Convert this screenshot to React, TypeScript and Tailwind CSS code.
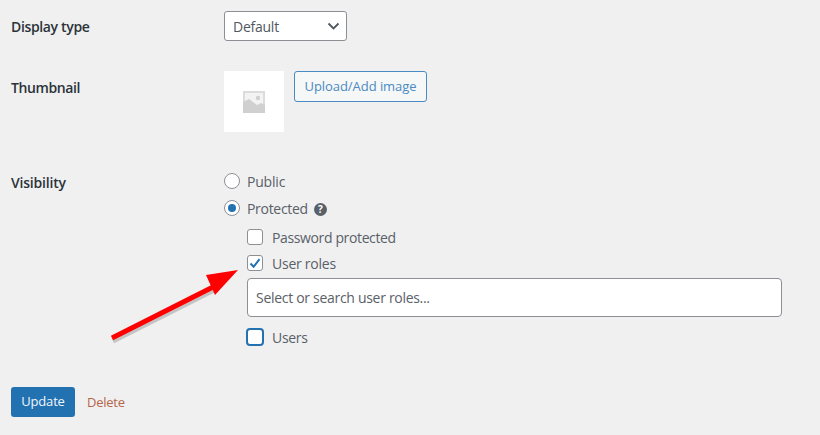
export default function App() {
  return (
    <div className="relative w-[820px] h-[435px] overflow-hidden bg-[#f0f0f1] pl-[11px] font-['Open_Sans','Noto_Sans',sans-serif] text-[14px] text-[#5a6068]">
      <div className="flex pt-[11px] h-[41px]">
        <div className="w-[213px] font-semibold text-[#2c3338] leading-[32px] tracking-[-0.35px]">Display type</div>
        <div className="w-[123px] h-[30px] rounded-[3px] border border-[#8c8f94] bg-white flex items-center justify-between pl-[8px] pr-[6px] text-[#50575e] tracking-[-0.25px]">
          <span>Default</span>
          <svg width="13" height="8" viewBox="0 0 13 8" fill="none"><path d="M1.5 1.5 6.5 6.5 11.5 1.5" stroke="#50575e" strokeWidth="1.8" /></svg>
        </div>
      </div>
      <div className="flex mt-[30px] h-[61px]">
        <div className="w-[213px] font-semibold text-[#2c3338] leading-[34px] tracking-[-0.4px]">Thumbnail</div>
        <div className="w-[60px] h-[61px] bg-white flex items-center justify-center">
          <svg width="22" height="22" viewBox="0 0 22 22">
            <rect width="22" height="22" fill="#dcdcdc" />
            <rect x="2" y="2" width="18" height="18" fill="#f3f3f3" />
            <circle cx="15" cy="7" r="2.2" fill="#d0d0d0" />
            <path d="M0 22V11l6-3 8 6 4-2 4 2v8z" fill="#d0d0d0" />
          </svg>
        </div>
        <div className="ml-[10px] w-[133px] h-[31px] rounded-[3px] border border-[#4a8bc2] bg-[#f6f7f7] text-[#4a8bc2] flex items-center justify-center text-[13px] tracking-[-0.05px]">Upload/Add image</div>
      </div>
      <div className="flex mt-[39px]">
        <div className="w-[213px] font-semibold text-[#2c3338] leading-[23px] tracking-[-0.2px]">Visibility</div>
        <div className="flex-1 flex flex-col">
          <div className="flex items-center h-[20px] gap-[7px]">
            <span className="w-[16px] h-[16px] rounded-full border border-[#8c8f94] bg-white" />
            <span className="tracking-[-0.2px]">Public</span>
          </div>
          <div className="flex items-center h-[20px] gap-[7px] mt-[7px]">
            <span className="w-[16px] h-[16px] rounded-full border border-[#8c8f94] bg-white flex items-center justify-center">
              <span className="w-[8px] h-[8px] rounded-full bg-[#2271b1]" />
            </span>
            <span className="tracking-[-0.3px]">Protected</span>
            <span className="w-[13px] h-[13px] rounded-full bg-[#5a6068] text-white text-[10px] font-bold leading-[13px] text-center -ml-[1px] mt-[3px]">?</span>
          </div>
          <div className="ml-[23px] flex flex-col">
            <div className="flex items-center h-[20px] gap-[9px] mt-[9px]">
              <span className="w-[16px] h-[16px] rounded-[3px] border border-[#8c8f94] bg-white" />
              <span className="tracking-[-0.37px]">Password protected</span>
            </div>
            <div className="flex items-center h-[20px] gap-[9px] mt-[6px]">
              <span className="w-[16px] h-[16px] rounded-[3px] border border-[#8c8f94] bg-white flex items-center justify-center">
                <svg width="12" height="11" viewBox="0 0 12 11" fill="none"><path d="M1.5 5.5 4.6 8.8 10.5 1.2" stroke="#2271b1" strokeWidth="2" /></svg>
              </span>
              <span className="tracking-[-0.25px]">User roles</span>
            </div>
            <div className="mt-[5px] w-[535px] h-[39px] rounded-[4px] border border-[#8c8f94] bg-white flex items-center pl-[8px] tracking-[-0.3px]">Select or search user roles...</div>
            <div className="flex items-center h-[20px] gap-[8px] mt-[10px] -ml-[1px]">
              <span className="w-[18px] h-[18px] rounded-[4px] border-2 border-[#2271b1] bg-white" />
              <span className="tracking-[-0.3px]">Users</span>
            </div>
          </div>
        </div>
      </div>
      <div className="flex items-center mt-[40px]">
        <div className="w-[64px] h-[30px] rounded-[3px] bg-[#2271b1] text-[#f0f6fb] flex items-center justify-center text-[13px] tracking-[-0.2px]">Update</div>
        <span className="ml-[12px] mt-[1px] text-[#b5664a] text-[13px] tracking-[-0.25px]">Delete</span>
      </div>
      <svg className="absolute left-[105px] top-[265px]" width="140" height="80" viewBox="0 0 140 80">
        <path d="M8 76 111 24" stroke="#000" strokeOpacity="0.18" strokeWidth="5" fill="none" />
        <path d="M7 73 110 21" stroke="#f00" strokeWidth="5" fill="none" />
        <path d="M133 5 101 10 110 30z" fill="#f00" />
      </svg>
    </div>
  );
}
